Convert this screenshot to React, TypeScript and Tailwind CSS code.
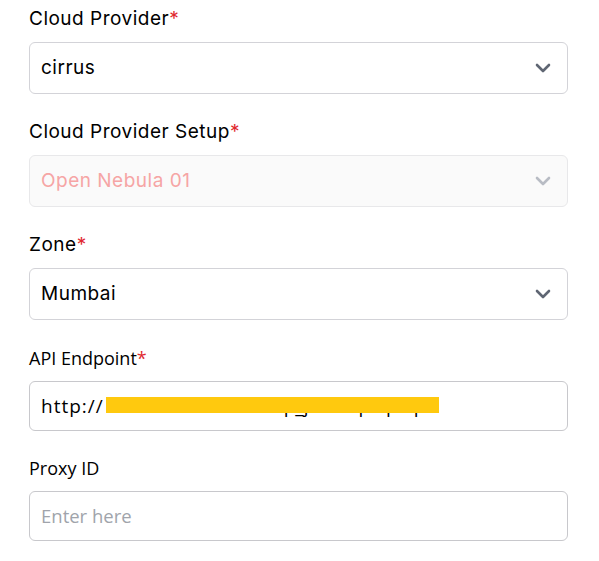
const poppins = "font-['Inter','Noto_Sans',sans-serif] tracking-[0.5px]"
const segoe = "font-['Open_Sans','Noto_Sans',sans-serif]"

function Chevron({ faded }: { faded?: boolean }) {
    return (
        <svg width="16" height="10" viewBox="0 0 16 10" className={faded ? 'text-[#b8bcc4]' : 'text-[#5f6673]'}>
            <path d="M2 2l6 6 6-6" fill="none" stroke="currentColor" strokeWidth="2.6" strokeLinecap="round" strokeLinejoin="round" />
        </svg>
    )
}

function Label({ text, required, sys }: { text: string; required?: boolean; sys?: boolean }) {
    return (
        <label className={`block h-7 leading-7 text-black ${sys ? `text-[18px] ${segoe}` : `text-[19px] ${poppins}`}`}>
            {text}
            {required && <span className="text-[#e0282e]">*</span>}
        </label>
    )
}

function Select({ value, disabled }: { value: string; disabled?: boolean }) {
    return (
        <div
            className={`mt-[9px] flex h-[52px] items-center justify-between rounded-md border pl-[11px] pr-[16px] ${
                disabled ? 'border-[#e8e8ea] bg-[#fafafa]' : 'border-[#d3d3d8] bg-white'
            }`}
        >
            <span className={`text-[19px] ${poppins} ${disabled ? 'text-[#f6a5a5]' : 'text-black'}`}>{value}</span>
            <Chevron faded={disabled} />
        </div>
    )
}

export default function App() {
    return (
        <div className="w-[599px] h-[561px] bg-white pt-[5px] pl-[29px] pr-[31px]">
            <div className="flex flex-col">
                <Label text="Cloud Provider" required />
                <Select value="cirrus" />

                <div className="mt-6">
                    <Label text="Cloud Provider Setup" required />
                    <Select value="Open Nebula 01" disabled />
                </div>

                <div className="mt-6">
                    <Label text="Zone" required />
                    <Select value="Mumbai" />
                </div>

                <div className="mt-6">
                    <Label text="API Endpoint" required sys />
                    <div className={`relative mt-[9px] flex h-[50px] items-center rounded-md border border-[#c8c8cc] pl-[11px] text-[19px] text-black ${segoe}`}>
                        <span className="tracking-[1px]">http://</span>
                        <span className="ml-[92px]">/</span>
                        <span className="ml-[66px]">/</span>
                        <span className="ml-[8px]">p_j</span>
                        <span className="ml-[50px]">p</span>
                        <span className="ml-[16px]">p</span>
                        <span className="ml-[16px]">p</span>
                        <div className="absolute left-[76px] top-[15px] h-[16px] w-[333px] bg-[#ffc90e]" />
                    </div>
                </div>

                <div className="mt-[23px]">
                    <Label text="Proxy ID" sys />
                    <div className="mt-[9px] flex h-[50px] items-center rounded-md border border-[#c8c8cc] pl-[11px]">
                        <span className={`text-[18.5px] text-[#a0a4ab] ${segoe}`}>Enter here</span>
                    </div>
                </div>
            </div>
        </div>
    )
}
